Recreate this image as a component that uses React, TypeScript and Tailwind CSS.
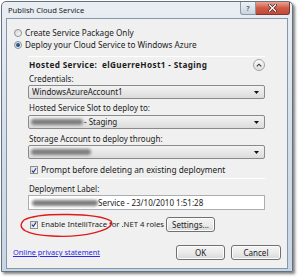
import React from "react";

function Radio({ checked }: { checked?: boolean }) {
  return (
    <span className="relative inline-flex w-[8px] h-[8px] rounded-full border border-[#8c8f94] bg-gradient-to-br from-[#d6d6d6] to-[#fbfbfb] items-center justify-center shrink-0">
      {checked && <span className="w-[4px] h-[4px] rounded-full bg-gradient-to-br from-[#2c6fb6] to-[#163d6b]" />}
    </span>
  );
}

function Check() {
  return (
    <span className="inline-flex w-[8px] h-[8px] border border-[#8e8f8f] bg-gradient-to-br from-[#dcdcdc] to-[#fafafa] items-center justify-center shrink-0">
      <svg width="7" height="7" viewBox="0 0 7 7">
        <path d="M1 3.6 L2.8 5.6 L6 0.8" fill="none" stroke="#1e3a8a" strokeWidth="1.3" />
      </svg>
    </span>
  );
}

function Arrow() {
  return (
    <svg width="5" height="3" viewBox="0 0 5 3" className="shrink-0">
      <path d="M0 0 H5 L2.5 3 Z" fill="#111" />
    </svg>
  );
}

function Blob({ w }: { w: number }) {
  return (
    <span
      className="inline-block h-[6px] rounded-full bg-[#7d7d7d] blur-[1.5px] shrink-0"
      style={{ width: w }}
    />
  );
}

function Button({ children, w }: { children: React.ReactNode; w: string }) {
  return (
    <div className={`${w} h-[15px] rounded-[3px] border border-[#707070] bg-gradient-to-b from-[#f4f4f4] via-[#ebebeb] to-[#d9d9d9] flex items-center justify-center shadow-[inset_0_0_0_1px_#fcfcfc]`}>
      {children}
    </div>
  );
}

export default function App() {
  return (
    <div className="w-[298px] h-[278px] bg-white relative overflow-hidden font-['Noto_Sans',sans-serif] text-[8px] leading-none text-[#1b1b1b]">
      {/* window */}
      <div className="ml-[1px] mt-[1px] w-[292px] h-[271px] rounded-t-[5px] border border-[#66717d] bg-gradient-to-b from-[#e9eef3] via-[#d3dfea] to-[#c7d6e4] shadow-[2px_2px_3px_rgba(0,0,0,0.5)] flex flex-col">
        {/* title bar */}
        <div className="h-[16px] flex items-start shrink-0">
          <span className="ml-[6px] mt-[5px] text-[7.6px] text-[#1a1a1a]">Publish Cloud Service</span>
          <div className="ml-auto mr-[2px] flex">
            <div className="w-[16px] h-[13px] rounded-bl-[3px] border border-t-0 border-[#8c98a6] bg-gradient-to-b from-[#eef2f6] to-[#c9d4df] flex items-center justify-center text-[7px] text-[#667] font-bold">?</div>
            <div className="w-[34px] h-[13px] rounded-br-[3px] border border-t-0 border-l-0 border-[#7a3a33] bg-gradient-to-b from-[#e7a394] via-[#cf5a45] to-[#c24a36] flex items-center justify-center">
              <svg width="9" height="8" viewBox="0 0 9 8">
                <path d="M1.5 1 L7.5 7 M7.5 1 L1.5 7" stroke="#3a1a16" strokeWidth="2.6" strokeLinecap="square" />
                <path d="M1.5 1 L7.5 7 M7.5 1 L1.5 7" stroke="#ffffff" strokeWidth="1.4" strokeLinecap="square" />
              </svg>
            </div>
          </div>
        </div>
        {/* client */}
        <div className="mx-[4px] mb-[2px] flex-1 border border-[#8597aa] bg-[#f0f0f0] flex flex-col pt-[8px] pb-[8px] relative">
          <div className="h-[12px] flex items-center pl-[7px] gap-[3px] text-[8.2px]">
            <Radio />
            <span>Create Service Package Only</span>
          </div>
          <div className="h-[12px] flex items-center pl-[7px] gap-[3px] text-[8.2px]">
            <Radio checked />
            <span>Deploy your Cloud Service to Windows Azure</span>
          </div>

          <div className="ml-[21px] mr-[22px] flex flex-col">
            <div className="mt-[5px] h-px bg-[#a0a0a0] border-b border-white" />
            <div className="mt-[2px] h-[12px] flex items-center pl-[1px]">
              <span className="font-bold text-[8.2px] tracking-[0.35px]">Hosted Service:&nbsp; elGuerreHost1 - Staging</span>
              <span className="ml-auto w-[12px] h-[12px] rounded-full border border-[#a3a3a3] bg-gradient-to-b from-[#fafafa] to-[#dedede] flex items-center justify-center">
                <svg width="6" height="4" viewBox="0 0 6 4">
                  <path d="M0.8 3.4 L3 1.2 L5.2 3.4" fill="none" stroke="#333" strokeWidth="1.1" />
                </svg>
              </span>
            </div>
            <div className="mt-[2px] h-[12px] flex items-center pl-[1px]">Credentials:</div>
            <div className="h-[14px] rounded-[2px] border border-[#8a8a8a] bg-gradient-to-b from-[#f3f3f3] to-[#dcdcdc] flex items-center pl-[3px] pr-[5px]">
              <span>WindowsAzureAccount1</span>
              <span className="ml-auto"><Arrow /></span>
            </div>
            <div className="mt-[3px] h-[12px] flex items-center pl-[1px]">Hosted Service Slot to deploy to:</div>
            <div className="mt-[1px] h-[14px] rounded-[2px] border border-[#8a8a8a] bg-gradient-to-b from-[#f3f3f3] to-[#dcdcdc] flex items-center pl-[2px] pr-[5px]">
              <Blob w={52} />
              <span className="ml-[1px]">- Staging</span>
              <span className="ml-auto"><Arrow /></span>
            </div>
            <div className="mt-[4px] h-[12px] flex items-center pl-[1px]">Storage Account to deploy through:</div>
            <div className="h-[14px] rounded-[2px] border border-[#8a8a8a] bg-gradient-to-b from-[#f3f3f3] to-[#dcdcdc] flex items-center pl-[2px] pr-[5px]">
              <Blob w={60} />
              <span className="ml-auto"><Arrow /></span>
            </div>
            <div className="mt-[5px] h-[12px] flex items-center pl-[2px] gap-[3px]">
              <Check />
              <span className="text-[8.3px]">Prompt before deleting an existing deployment</span>
            </div>
            <div className="mt-[2px] h-px bg-[#a0a0a0] border-b border-white" />
            <div className="mt-[4px] h-[12px] flex items-center pl-[1px]">Deployment Label:</div>
            <div className="h-[15px] border border-[#abadb3] bg-white flex items-center pl-[3px]">
              <Blob w={66} />
              <span>Service - 23/10/2010 1:51:28</span>
            </div>
            <div className="mt-[7px] h-[15px] flex items-center pl-[2px] gap-[3px]">
              <Check />
              <span className="w-[116px] whitespace-nowrap text-[7.7px]">Enable IntelliTrace for .NET 4 roles</span>
              <div className="ml-[6px]">
                <Button w="w-[49px]">Settings...</Button>
              </div>
            </div>
          </div>

          <div className="mt-auto h-[15px] flex items-center pl-[6px] pr-[6px]">
            <span className="text-[#2a2ae6] underline text-[7.4px]">Online privacy statement</span>
            <div className="ml-auto flex gap-[6px]">
              <Button w="w-[49px]">OK</Button>
              <Button w="w-[50px]">Cancel</Button>
            </div>
          </div>
        </div>
      </div>
      {/* red annotation ellipse */}
      <svg className="absolute left-0 top-0 pointer-events-none" width="298" height="278" viewBox="0 0 298 278">
        <path d="M24 220 C 38 212, 98 213, 111 221 C 117 230, 82 238, 52 236 C 28 235, 15 229, 24 220" fill="none" stroke="#e01b1b" strokeWidth="1.4" />
      </svg>
    </div>
  );
}
